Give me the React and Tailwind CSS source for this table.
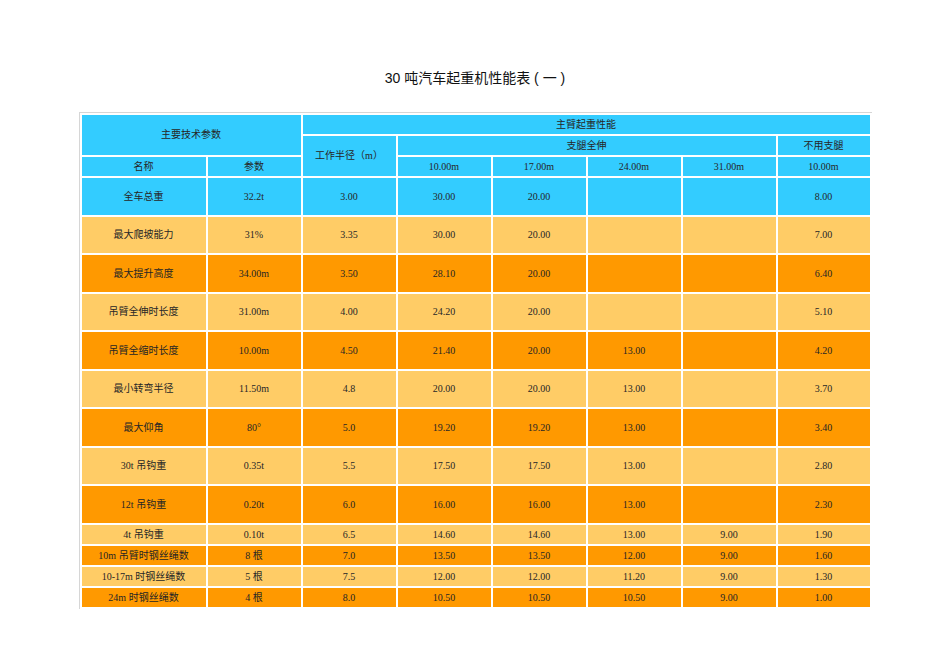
const rows = [
  ['全车总重', '32.2t', '3.00', '30.00', '20.00', '', '', '8.00'],
  ['最大爬坡能力', '31%', '3.35', '30.00', '20.00', '', '', '7.00'],
  ['最大提升高度', '34.00m', '3.50', '28.10', '20.00', '', '', '6.40'],
  ['吊臂全伸时长度', '31.00m', '4.00', '24.20', '20.00', '', '', '5.10'],
  ['吊臂全缩时长度', '10.00m', '4.50', '21.40', '20.00', '13.00', '', '4.20'],
  ['最小转弯半径', '11.50m', '4.8', '20.00', '20.00', '13.00', '', '3.70'],
  ['最大仰角', '80°', '5.0', '19.20', '19.20', '13.00', '', '3.40'],
  ['30t 吊钩重', '0.35t', '5.5', '17.50', '17.50', '13.00', '', '2.80'],
  ['12t 吊钩重', '0.20t', '6.0', '16.00', '16.00', '13.00', '', '2.30'],
  ['4t 吊钩重', '0.10t', '6.5', '14.60', '14.60', '13.00', '9.00', '1.90'],
  ['10m 吊臂时钢丝绳数', '8 根', '7.0', '13.50', '13.50', '12.00', '9.00', '1.60'],
  ['10-17m 时钢丝绳数', '5 根', '7.5', '12.00', '12.00', '11.20', '9.00', '1.30'],
  ['24m 时钢丝绳数', '4 根', '8.0', '10.50', '10.50', '10.50', '9.00', '1.00'],
]

// cell heights for the 13 data rows
const heights = ['h-[37px]', 'h-[36px]', 'h-[37px]', 'h-[36px]', 'h-[37px]', 'h-[36px]', 'h-[37px]', 'h-[36px]', 'h-[37px]', 'h-[19px]', 'h-[19px]', 'h-[19px]', 'h-[19px]']

const rowColor = (i) => {
  if (i === 0) return 'bg-[#33ccff]'
  return i % 2 === 1 ? 'bg-[#ffcc66]' : 'bg-[#ff9900]'
}

export default function App() {
  const hd = 'bg-[#33ccff] p-0 text-center align-middle font-normal'

  return (
    <div className="h-[672px] w-full bg-white pt-[68px]">
      <h1 className="text-center font-['Liberation_Sans','Noto_Sans_CJK_SC',sans-serif] text-[14px] leading-[20px] font-normal text-[#111]">
        30 吨汽车起重机性能表 ( 一 )
      </h1>

      <table className="mx-auto mt-[24px] table-fixed border-separate border-spacing-[2px] border-t border-l border-[#d6d6d6] font-['Liberation_Serif','Noto_Sans_CJK_SC',serif] text-[10px] leading-none text-[#262626]">
        <colgroup>
          <col className="w-[124px]" />
          <col className="w-[93px]" />
          <col className="w-[93px]" />
          <col className="w-[93px]" />
          <col className="w-[93px]" />
          <col className="w-[93px]" />
          <col className="w-[93px]" />
          <col className="w-[92px]" />
        </colgroup>
        <thead>
          <tr className="h-[19px]">
            <th colSpan={2} rowSpan={2} className={hd}>主要技术参数</th>
            <th colSpan={6} className={hd}>主臂起重性能</th>
          </tr>
          <tr className="h-[19px]">
            <th rowSpan={2} className={hd}>工作半径（m）</th>
            <th colSpan={4} className={hd}>支腿全伸</th>
            <th className={hd}>不用支腿</th>
          </tr>
          <tr className="h-[19px]">
            <th className={hd}>名称</th>
            <th className={hd}>参数</th>
            <th className={hd}>10.00m</th>
            <th className={hd}>17.00m</th>
            <th className={hd}>24.00m</th>
            <th className={hd}>31.00m</th>
            <th className={hd}>10.00m</th>
          </tr>
        </thead>
        <tbody>
          {rows.map((r, i) => (
            <tr key={i} className={heights[i]}>
              {r.map((c, j) => (
                <td key={j} className={`${rowColor(i)} p-0 text-center align-middle`}>
                  {c}
                </td>
              ))}
            </tr>
          ))}
        </tbody>
      </table>
    </div>
  )
}
